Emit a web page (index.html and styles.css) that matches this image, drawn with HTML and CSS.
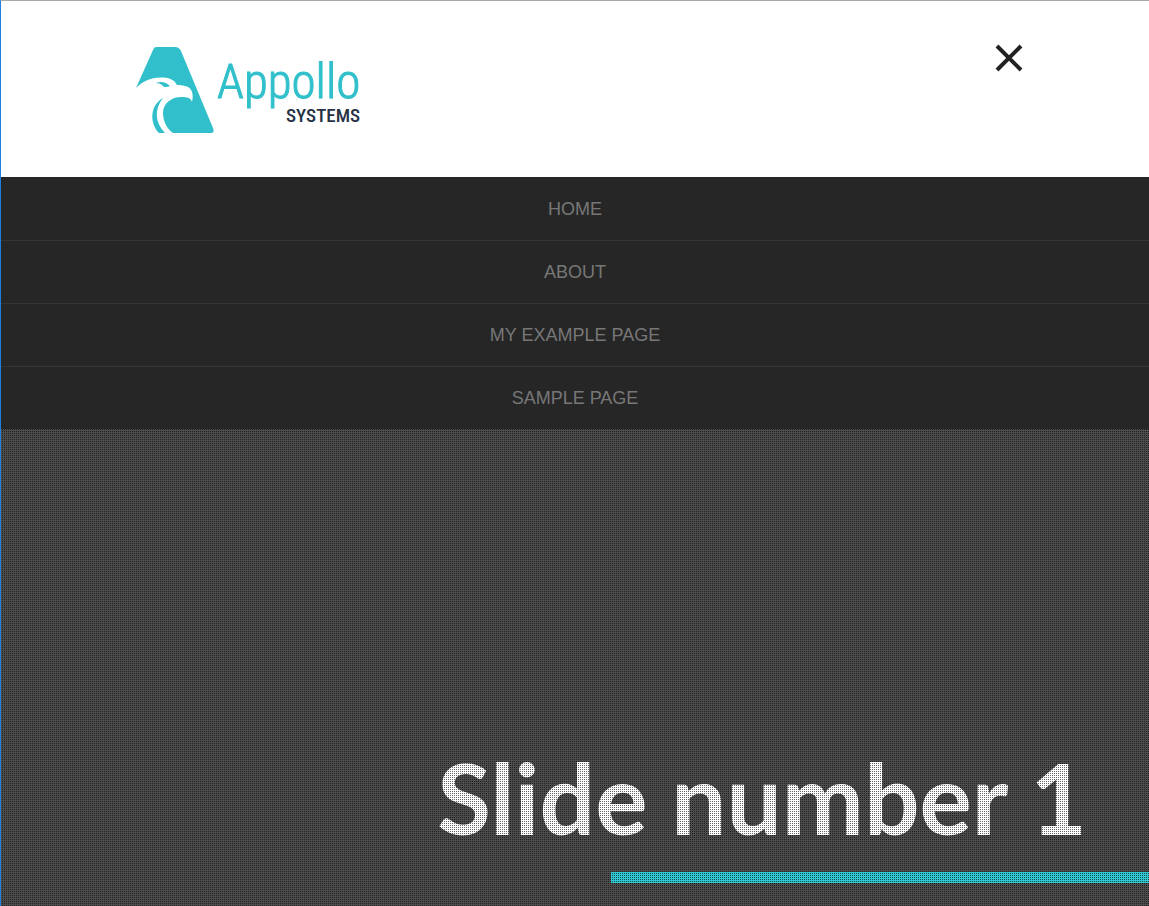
FILE: index.html
```html
<!DOCTYPE html>
<html lang="en">
<head>
<meta charset="utf-8">
<meta name="viewport" content="width=device-width, initial-scale=1">
<title>Appollo Systems</title>
<link rel="stylesheet" href="styles.css">
</head>
<body>
<div class="page">
  <header class="header">
    <a class="logo" href="#" aria-label="Appollo Systems">
      <svg class="logo-image" viewBox="0 0 228 90" width="228" height="90">
        <path class="teal" d="M20 1H39Q43 1 45 5L77 82Q79 87 75 87H37C30 82 27 74 27 67C27 57 36 51 45 51C52 51 55 52 56 56C58 48 56 41 49 40C46 39 44 39 41 39C38 33 32 31.5 25 31.5C14 31.5 6 36 0 42L17 4Q18 1 20 1Z"/>
        <path class="teal" d="M27 52C13 60 14 78 23 87H29C19 77 18 63 27 52ZM20 37C25 35 30 36 34 40C30 42 27 41 26 39Q24 37 20 37Z"/>
        <text class="logo-name" x="81" y="52">Appollo</text>
        <text class="logo-sub" x="150" y="76">SYSTEMS</text>
      </svg>
    </a>
    <button class="close" type="button" aria-label="Close menu">
      <svg viewBox="0 0 28 28" width="28" height="28"><path d="M2 2L26 26M26 2L2 26" stroke="#222" stroke-width="4"/></svg>
    </button>
  </header>
  <nav class="menu" aria-label="Main">
    <a href="#">HOME</a>
    <a href="#">ABOUT</a>
    <a href="#">MY EXAMPLE PAGE</a>
    <a href="#">SAMPLE PAGE</a>
  </nav>
  <main class="slide">
    <h1>Slide number 1</h1>
    <div class="rule"></div>
  </main>
</div>
</body>
</html>
```
FILE: styles.css
```css
* { box-sizing: border-box; }
body { margin: 0; font-family: "Liberation Sans", Arial, sans-serif; }
.page {
  display: flex;
  flex-direction: column;
  min-height: 100vh;
  border-top: 1px solid #aaa;
  border-left: 1px solid #1d80dc;
}
.header {
  display: flex;
  justify-content: space-between;
  align-items: flex-start;
  padding: 43px 11% 40px 135px;
}
.logo { display: block; padding: 2px 0 1px; }
.logo-image { display: block; }
.teal, .logo-name { fill: #31c0cb; }
.logo-name { font: 300 49px "Roboto Condensed", "Liberation Sans", sans-serif; stroke: #31c0cb; }
.logo-sub { font: 500 19px "Roboto Condensed", "Liberation Sans", sans-serif; fill: #263244; }
.close { padding: 0; border: 0; background: none; }
.close svg { display: block; }
.menu { display: flex; flex-direction: column; background: #262626; }
.menu a {
  padding: 21px 0 20px;
  border-top: 1px solid #353535;
  font-size: 18px;
  line-height: 21px;
  text-align: center;
  text-decoration: none;
  color: #777;
}
.menu a:first-child { border-color: #262626; }
.slide {
  position: relative;
  flex: 1;
  display: flex;
  flex-direction: column;
  justify-content: flex-end;
  align-items: flex-end;
  padding: 100px 0 23px;
  background: #4d4d4d;
}
.slide::after {
  content: "";
  position: absolute;
  inset: 0;
  background: conic-gradient(rgba(0, 0, 0, 0.6) 25%, transparent 0) 0 0 / 2px 2px;
}
.slide h1 {
  margin: 0 62px 19px 0;
  font: bold 98px/112px Lato, sans-serif;
  color: #fff;
  white-space: nowrap;
}
.rule { width: 46.9%; height: 11px; background: #31c8d4; }
```
